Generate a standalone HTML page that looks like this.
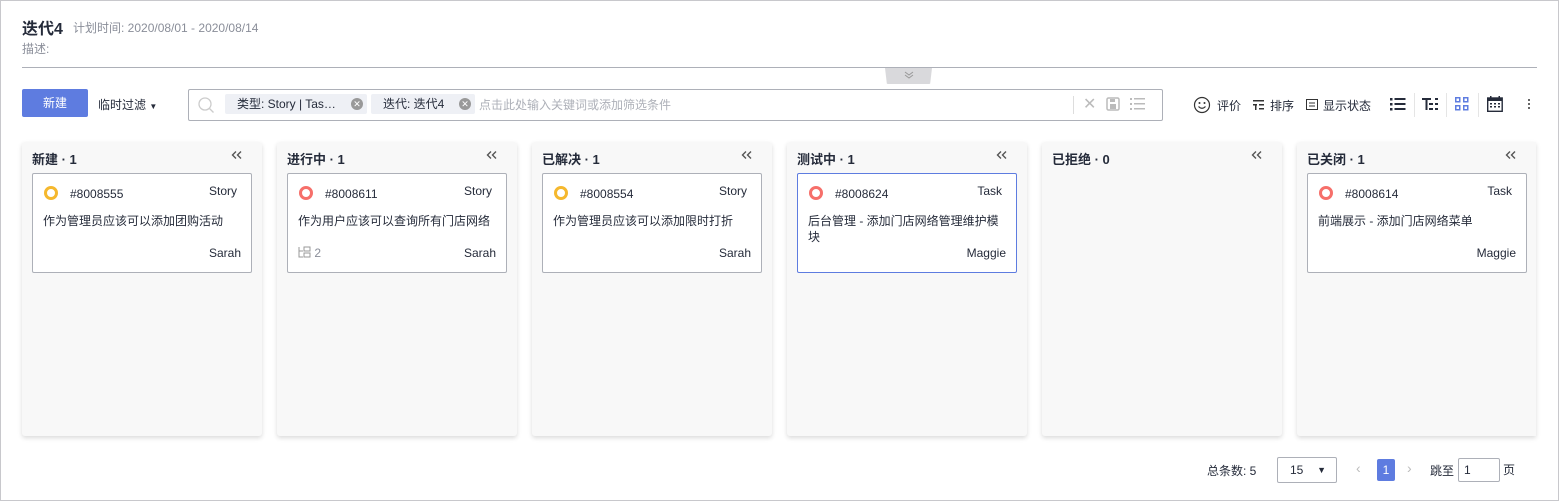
<!DOCTYPE html>
<html><head><meta charset="utf-8"><style>
*{box-sizing:border-box;margin:0;padding:0}
body{width:1559px;height:501px;overflow:hidden;background:#fff;font-family:"Liberation Sans","Noto Sans CJK SC",sans-serif;color:#252b3a;position:relative}
.frame{position:absolute;left:0;top:0;width:1559px;height:501px;border:1px solid #c8c8cc}
.abs{position:absolute}
.col{position:absolute;top:142px;width:240px;height:294px;background:#f8f8f8;border-radius:3px;box-shadow:0 2px 5px rgba(0,0,0,.15)}
.col h3{position:absolute;left:10px;top:7px;font-size:13px;font-weight:bold;color:#252b3a}
.col .cc{position:absolute;right:19px;top:8px}
.card{position:absolute;left:10px;top:31px;width:220px;height:100px;background:#fff;border:1px solid #adb0b8;border-radius:2px;font-size:12px}
.card.sel{border-color:#5e7ce0}
.dot{position:absolute;left:11px;top:12px;width:14px;height:14px;border-radius:50%;border:3px solid #f5b82e}
.dot.r{border-color:#f66f6a}
.id{position:absolute;left:37px;top:13px}
.tp{position:absolute;right:14px;top:10px}
.ds{position:absolute;left:10px;top:39px;right:10px;line-height:16px}
.ow{position:absolute;right:10px;top:72px}
.tb{font-size:12px;color:#252b3a}
</style></head><body>
<div class="frame"></div>
<div class="abs" style="left:22px;top:15px;font-size:16px;font-weight:bold">迭代4</div>
<div class="abs" style="left:73px;top:19px;font-size:12px;color:#8a8e99">计划时间: 2020/08/01 - 2020/08/14</div>
<div class="abs" style="left:22px;top:40px;font-size:12px;color:#8a8e99">描述:</div>
<div class="abs" style="left:22px;top:67px;width:1515px;height:1px;background:#adb0b8"></div>
<div class="abs" style="left:885px;top:68px;width:47px;height:16px;background:#d9d9dc;clip-path:polygon(0 0,100% 0,96% 100%,4% 100%);border-radius:0 0 3px 3px"></div>
<svg class="abs" style="left:903px;top:70px" width="12" height="10"><path d="M2 2l4 3 4-3M2 5l4 3 4-3" fill="none" stroke="#999" stroke-width="1"/></svg>
<div class="abs" style="left:22px;top:89px;width:66px;height:28px;background:#5e7ce0;border-radius:2px;color:#fff;font-size:12px;text-align:center;line-height:28px">新建</div>
<div class="abs" style="left:98px;top:96px;font-size:12px">临时过滤 <span style="font-size:8px">▼</span></div>
<div class="abs" style="left:188px;top:89px;width:975px;height:32px;border:1px solid #adb0b8;border-radius:2px"></div>
<svg class="abs" style="left:197px;top:96px" width="18" height="18"><circle cx="8" cy="8" r="6" fill="none" stroke="#ccc" stroke-width="1.3"/><path d="M12.5 12.5l4 4" stroke="#ccc" stroke-width="1.3"/></svg>
<div class="abs" style="left:225px;top:94px;width:142px;height:20px;background:#eef0f5;border-radius:2px;font-size:12px;line-height:20px;padding-left:12px">类型: Story | Tas…</div>
<div class="abs" style="left:351px;top:98px;width:12px;height:12px;border-radius:50%;background:#999;color:#fff;font-size:9px;text-align:center;line-height:12px">✕</div>
<div class="abs" style="left:371px;top:94px;width:104px;height:20px;background:#eef0f5;border-radius:2px;font-size:12px;line-height:20px;padding-left:12px">迭代: 迭代4</div>
<div class="abs" style="left:459px;top:98px;width:12px;height:12px;border-radius:50%;background:#999;color:#fff;font-size:9px;text-align:center;line-height:12px">✕</div>
<div class="abs" style="left:479px;top:96px;font-size:12px;color:#adb0b8">点击此处输入关键词或添加筛选条件</div>
<div class="abs" style="left:1073px;top:96px;width:1px;height:18px;background:#ddd"></div>
<div class="abs" style="left:1083px;top:94px;font-size:16px;color:#bbb">✕</div>
<svg class="abs" style="left:1106px;top:97px" width="14" height="14"><rect x="1" y="1" width="12" height="12" rx="1.5" fill="none" stroke="#bbb" stroke-width="1.5"/><rect x="4" y="7" width="6" height="5" fill="#bbb"/><rect x="4" y="2" width="5" height="3" fill="#bbb"/></svg>
<svg class="abs" style="left:1130px;top:97px" width="16" height="14"><g fill="#bbb"><rect x="0" y="1" width="2" height="2"/><rect x="0" y="6" width="2" height="2"/><rect x="0" y="11" width="2" height="2"/><rect x="4" y="1" width="11" height="1.5"/><rect x="4" y="6" width="11" height="1.5"/><rect x="4" y="11" width="11" height="1.5"/></g></svg>
<svg class="abs" style="left:1193px;top:96px" width="18" height="18"><circle cx="9" cy="9" r="7.5" fill="none" stroke="#333" stroke-width="1.2"/><circle cx="6.5" cy="7" r="1" fill="#333"/><circle cx="11.5" cy="7" r="1" fill="#333"/><path d="M5.5 10.5q3.5 3.5 7 0" fill="none" stroke="#333" stroke-width="1.2"/></svg>
<div class="abs tb" style="left:1217px;top:97px">评价</div>
<svg class="abs" style="left:1253px;top:100px" width="12" height="10"><g fill="#333"><rect x="0" y="0" width="11" height="1.5"/><rect x="0" y="4" width="4" height="1.5"/><rect x="6" y="4" width="5" height="1.5"/><rect x="2" y="4" width="1.5" height="6"/><rect x="6" y="8" width="5" height="1.5"/></g></svg>
<div class="abs tb" style="left:1270px;top:97px">排序</div>
<svg class="abs" style="left:1306px;top:99px" width="12" height="12"><rect x="0.5" y="0.5" width="11" height="10" fill="none" stroke="#333"/><path d="M3 4h6M3 7h6" stroke="#333"/></svg>
<div class="abs tb" style="left:1323px;top:97px">显示状态</div>
<svg class="abs" style="left:1390px;top:97px" width="16" height="14"><g fill="#252b3a"><rect x="0" y="1" width="2.5" height="2.5"/><rect x="0" y="6" width="2.5" height="2.5"/><rect x="0" y="11" width="2.5" height="2.5"/><rect x="4.5" y="1" width="11" height="2"/><rect x="4.5" y="6" width="11" height="2"/><rect x="4.5" y="11" width="11" height="2"/></g></svg>
<div class="abs" style="left:1414px;top:93px;width:1px;height:24px;background:#e5e5e5"></div>
<svg class="abs" style="left:1422px;top:97px" width="18" height="14"><g fill="#252b3a"><rect x="0" y="1" width="9" height="2"/><rect x="3.5" y="1" width="2" height="12"/><rect x="7" y="6" width="4" height="2"/><rect x="7" y="11" width="4" height="2"/><rect x="13" y="1" width="3" height="2"/><rect x="13" y="6" width="3" height="2"/><rect x="13" y="11" width="3" height="2"/></g></svg>
<div class="abs" style="left:1446px;top:93px;width:1px;height:24px;background:#e5e5e5"></div>
<svg class="abs" style="left:1455px;top:97px" width="14" height="14"><g fill="#5e7ce0"><rect x="0" y="0" width="5.5" height="5.5"/><rect x="8" y="0" width="5.5" height="5.5"/><rect x="0" y="8" width="5.5" height="5.5"/><rect x="8" y="8" width="5.5" height="5.5"/></g><g fill="#fff"><rect x="1.5" y="1.5" width="2.5" height="2.5"/><rect x="9.5" y="1.5" width="2.5" height="2.5"/><rect x="1.5" y="9.5" width="2.5" height="2.5"/><rect x="9.5" y="9.5" width="2.5" height="2.5"/></g></svg>
<div class="abs" style="left:1478px;top:93px;width:1px;height:24px;background:#e5e5e5"></div>
<svg class="abs" style="left:1487px;top:96px" width="16" height="16"><rect x="0.7" y="2" width="14.5" height="13.3" fill="none" stroke="#252b3a" stroke-width="1.4"/><rect x="0.7" y="2" width="14.5" height="3" fill="#252b3a"/><rect x="3" y="0" width="1.5" height="3" fill="#252b3a"/><rect x="11.5" y="0" width="1.5" height="3" fill="#252b3a"/><g fill="#252b3a"><rect x="3" y="7" width="2" height="1.5"/><rect x="7" y="7" width="2" height="1.5"/><rect x="11" y="7" width="2" height="1.5"/><rect x="3" y="10" width="2" height="1.5"/><rect x="7" y="10" width="2" height="1.5"/><rect x="11" y="10" width="2" height="1.5"/></g></svg>
<div class="abs" style="left:1528px;top:98px;width:2px;height:12px;background:radial-gradient(circle,#333 0.9px,transparent 1px) 0 0/2px 4px"></div>

<svg width="0" height="0" style="position:absolute"><defs><symbol id="cc" viewBox="0 0 12 10"><path d="M5 1.5L1.5 5 5 8.5M10 1.5L6.5 5 10 8.5" fill="none" stroke="#555" stroke-width="1.4"/></symbol></defs></svg>

<div class="col" style="left:22px"><h3>新建 · 1</h3><svg class="cc" width="12" height="10"><use href="#cc"/></svg>
<div class="card"><div class="dot"></div><div class="id">#8008555</div><div class="tp">Story</div><div class="ds">作为管理员应该可以添加团购活动</div><div class="ow">Sarah</div></div></div>
<div class="col" style="left:277px"><h3>进行中 · 1</h3><svg class="cc" width="12" height="10"><use href="#cc"/></svg>
<div class="card"><div class="dot r"></div><div class="id">#8008611</div><div class="tp">Story</div><div class="ds">作为用户应该可以查询所有门店网络</div><div class="ow">Sarah</div>
<div style="position:absolute;left:10px;top:72px;color:#8a8e99"><svg width="13" height="12" style="vertical-align:-1px"><path d="M1 1v10h4M1 5h4M6 1h6v4H6zM6 7h6v4H6z" fill="none" stroke="#999"/></svg> 2</div></div></div>
<div class="col" style="left:532px"><h3>已解决 · 1</h3><svg class="cc" width="12" height="10"><use href="#cc"/></svg>
<div class="card"><div class="dot"></div><div class="id">#8008554</div><div class="tp">Story</div><div class="ds">作为管理员应该可以添加限时打折</div><div class="ow">Sarah</div></div></div>
<div class="col" style="left:787px"><h3>测试中 · 1</h3><svg class="cc" width="12" height="10"><use href="#cc"/></svg>
<div class="card sel"><div class="dot r"></div><div class="id">#8008624</div><div class="tp">Task</div><div class="ds">后台管理 - 添加门店网络管理维护模块</div><div class="ow">Maggie</div></div></div>
<div class="col" style="left:1042px"><h3>已拒绝 · 0</h3><svg class="cc" width="12" height="10"><use href="#cc"/></svg></div>
<div class="col" style="left:1297px;width:239px;border-radius:3px 0 0 3px"><h3>已关闭 · 1</h3><svg class="cc" width="12" height="10"><use href="#cc"/></svg>
<div class="card"><div class="dot r"></div><div class="id">#8008614</div><div class="tp">Task</div><div class="ds">前端展示 - 添加门店网络菜单</div><div class="ow">Maggie</div></div></div>

<div class="abs" style="left:1207px;top:462px;font-size:12px">总条数: 5</div>
<div class="abs" style="left:1277px;top:457px;width:60px;height:26px;border:1px solid #adb0b8;border-radius:2px;font-size:12px;line-height:24px;padding-left:12px">15<span style="position:absolute;right:10px;font-size:9px">▼</span></div>
<div class="abs" style="left:1356px;top:460px;font-size:14px;color:#bbb">‹</div>
<div class="abs" style="left:1377px;top:459px;width:18px;height:22px;background:#5e7ce0;border-radius:2px;color:#fff;font-size:12px;text-align:center;line-height:22px">1</div>
<div class="abs" style="left:1407px;top:460px;font-size:14px;color:#bbb">›</div>
<div class="abs" style="left:1430px;top:462px;font-size:12px">跳至</div>
<div class="abs" style="left:1458px;top:458px;width:42px;height:24px;border:1px solid #adb0b8;border-radius:2px;font-size:12px;line-height:22px;padding-left:5px">1</div>
<div class="abs" style="left:1503px;top:461px;font-size:12px">页</div>
</body></html>
